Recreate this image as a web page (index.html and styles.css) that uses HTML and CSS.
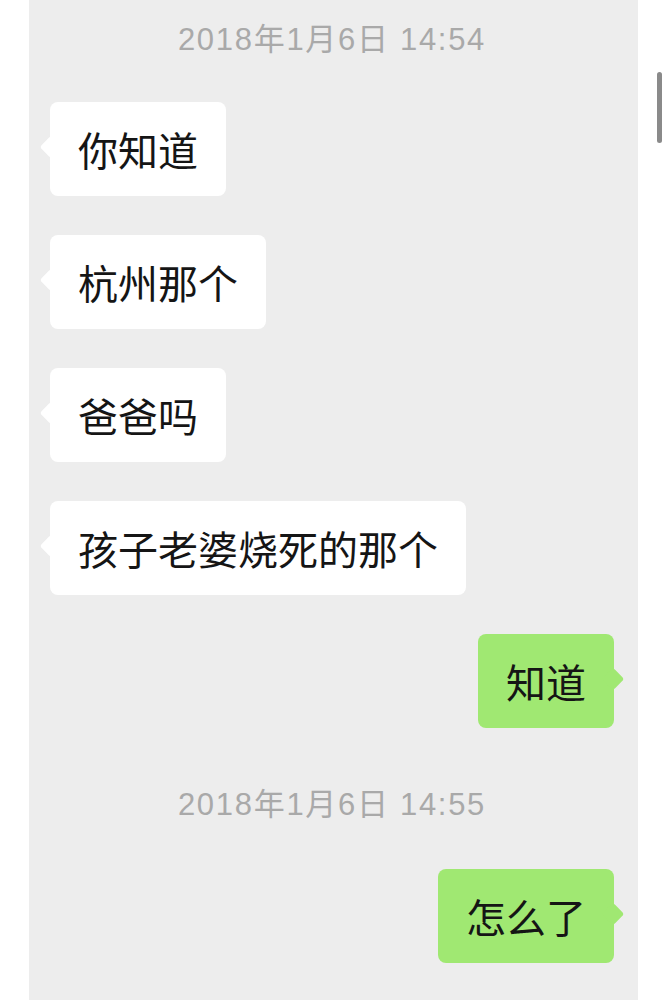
FILE: index.html
```html
<!DOCTYPE html>
<html lang="zh-CN">
<head>
  <meta charset="UTF-8">
  <meta name="viewport" content="width=device-width, initial-scale=1.0">
  <title>聊天记录</title>
  <link rel="stylesheet" href="styles.css">
</head>
<body>
  <div class="chat">
    <div class="time first">2018年1月6日 14:54</div>

    <div class="msg left first-msg">
      <div class="bubble">你知道</div>
    </div>
    <div class="msg left">
      <div class="bubble">杭州那个</div>
    </div>
    <div class="msg left">
      <div class="bubble">爸爸吗</div>
    </div>
    <div class="msg left">
      <div class="bubble">孩子老婆烧死的那个</div>
    </div>
    <div class="msg right">
      <div class="bubble">知道</div>
    </div>

    <div class="time">2018年1月6日 14:55</div>

    <div class="msg right after-time">
      <div class="bubble">怎么了</div>
    </div>
  </div>

  <div class="scrollbar"></div>
</body>
</html>
```

FILE: styles.css
```css
body {
  margin: 0;
  background: #fff;
  font-family: "Noto Sans CJK SC", "Liberation Sans", sans-serif;
}
.chat {
  margin: 0 29px;
  min-height: 1000px;
  padding: 0 24px 0 21px;
  background-color: #ededed;
  display: flex;
  flex-direction: column;
}
.time {
  margin-top: 57px;
  text-align: center;
  font-family: "Liberation Sans", "Noto Sans CJK SC", sans-serif;
  font-size: 31px;
  line-height: 40px;
  letter-spacing: 1.7px;
  color: #a9a9a9;
}
.time.first {
  margin-top: 20px;
}
.msg {
  display: flex;
  margin-top: 39px;
}
.msg.first-msg {
  margin-top: 42px;
}
.msg.after-time {
  margin-top: 44px;
}
.msg.left {
  justify-content: flex-start;
}
.msg.right {
  justify-content: flex-end;
}
.bubble {
  position: relative;
  padding: 27px 28px;
  font-size: 40px;
  line-height: 40px;
  color: #151515;
  background: #fff;
  border-radius: 8px;
}
.bubble::before {
  content: "";
  position: absolute;
  top: 50%;
  width: 16px;
  height: 16px;
  margin-top: -10px;
  background: inherit;
  border-radius: 3px;
  transform: rotate(45deg);
}
.left .bubble::before {
  left: -7px;
}
.right .bubble {
  background: #a0e872;
}
.right .bubble::before {
  right: -7px;
}
.scrollbar {
  position: absolute;
  top: 72px;
  left: 657px;
  width: 5px;
  height: 71px;
  border-radius: 3px;
  background: #8a8a8a;
}
```
